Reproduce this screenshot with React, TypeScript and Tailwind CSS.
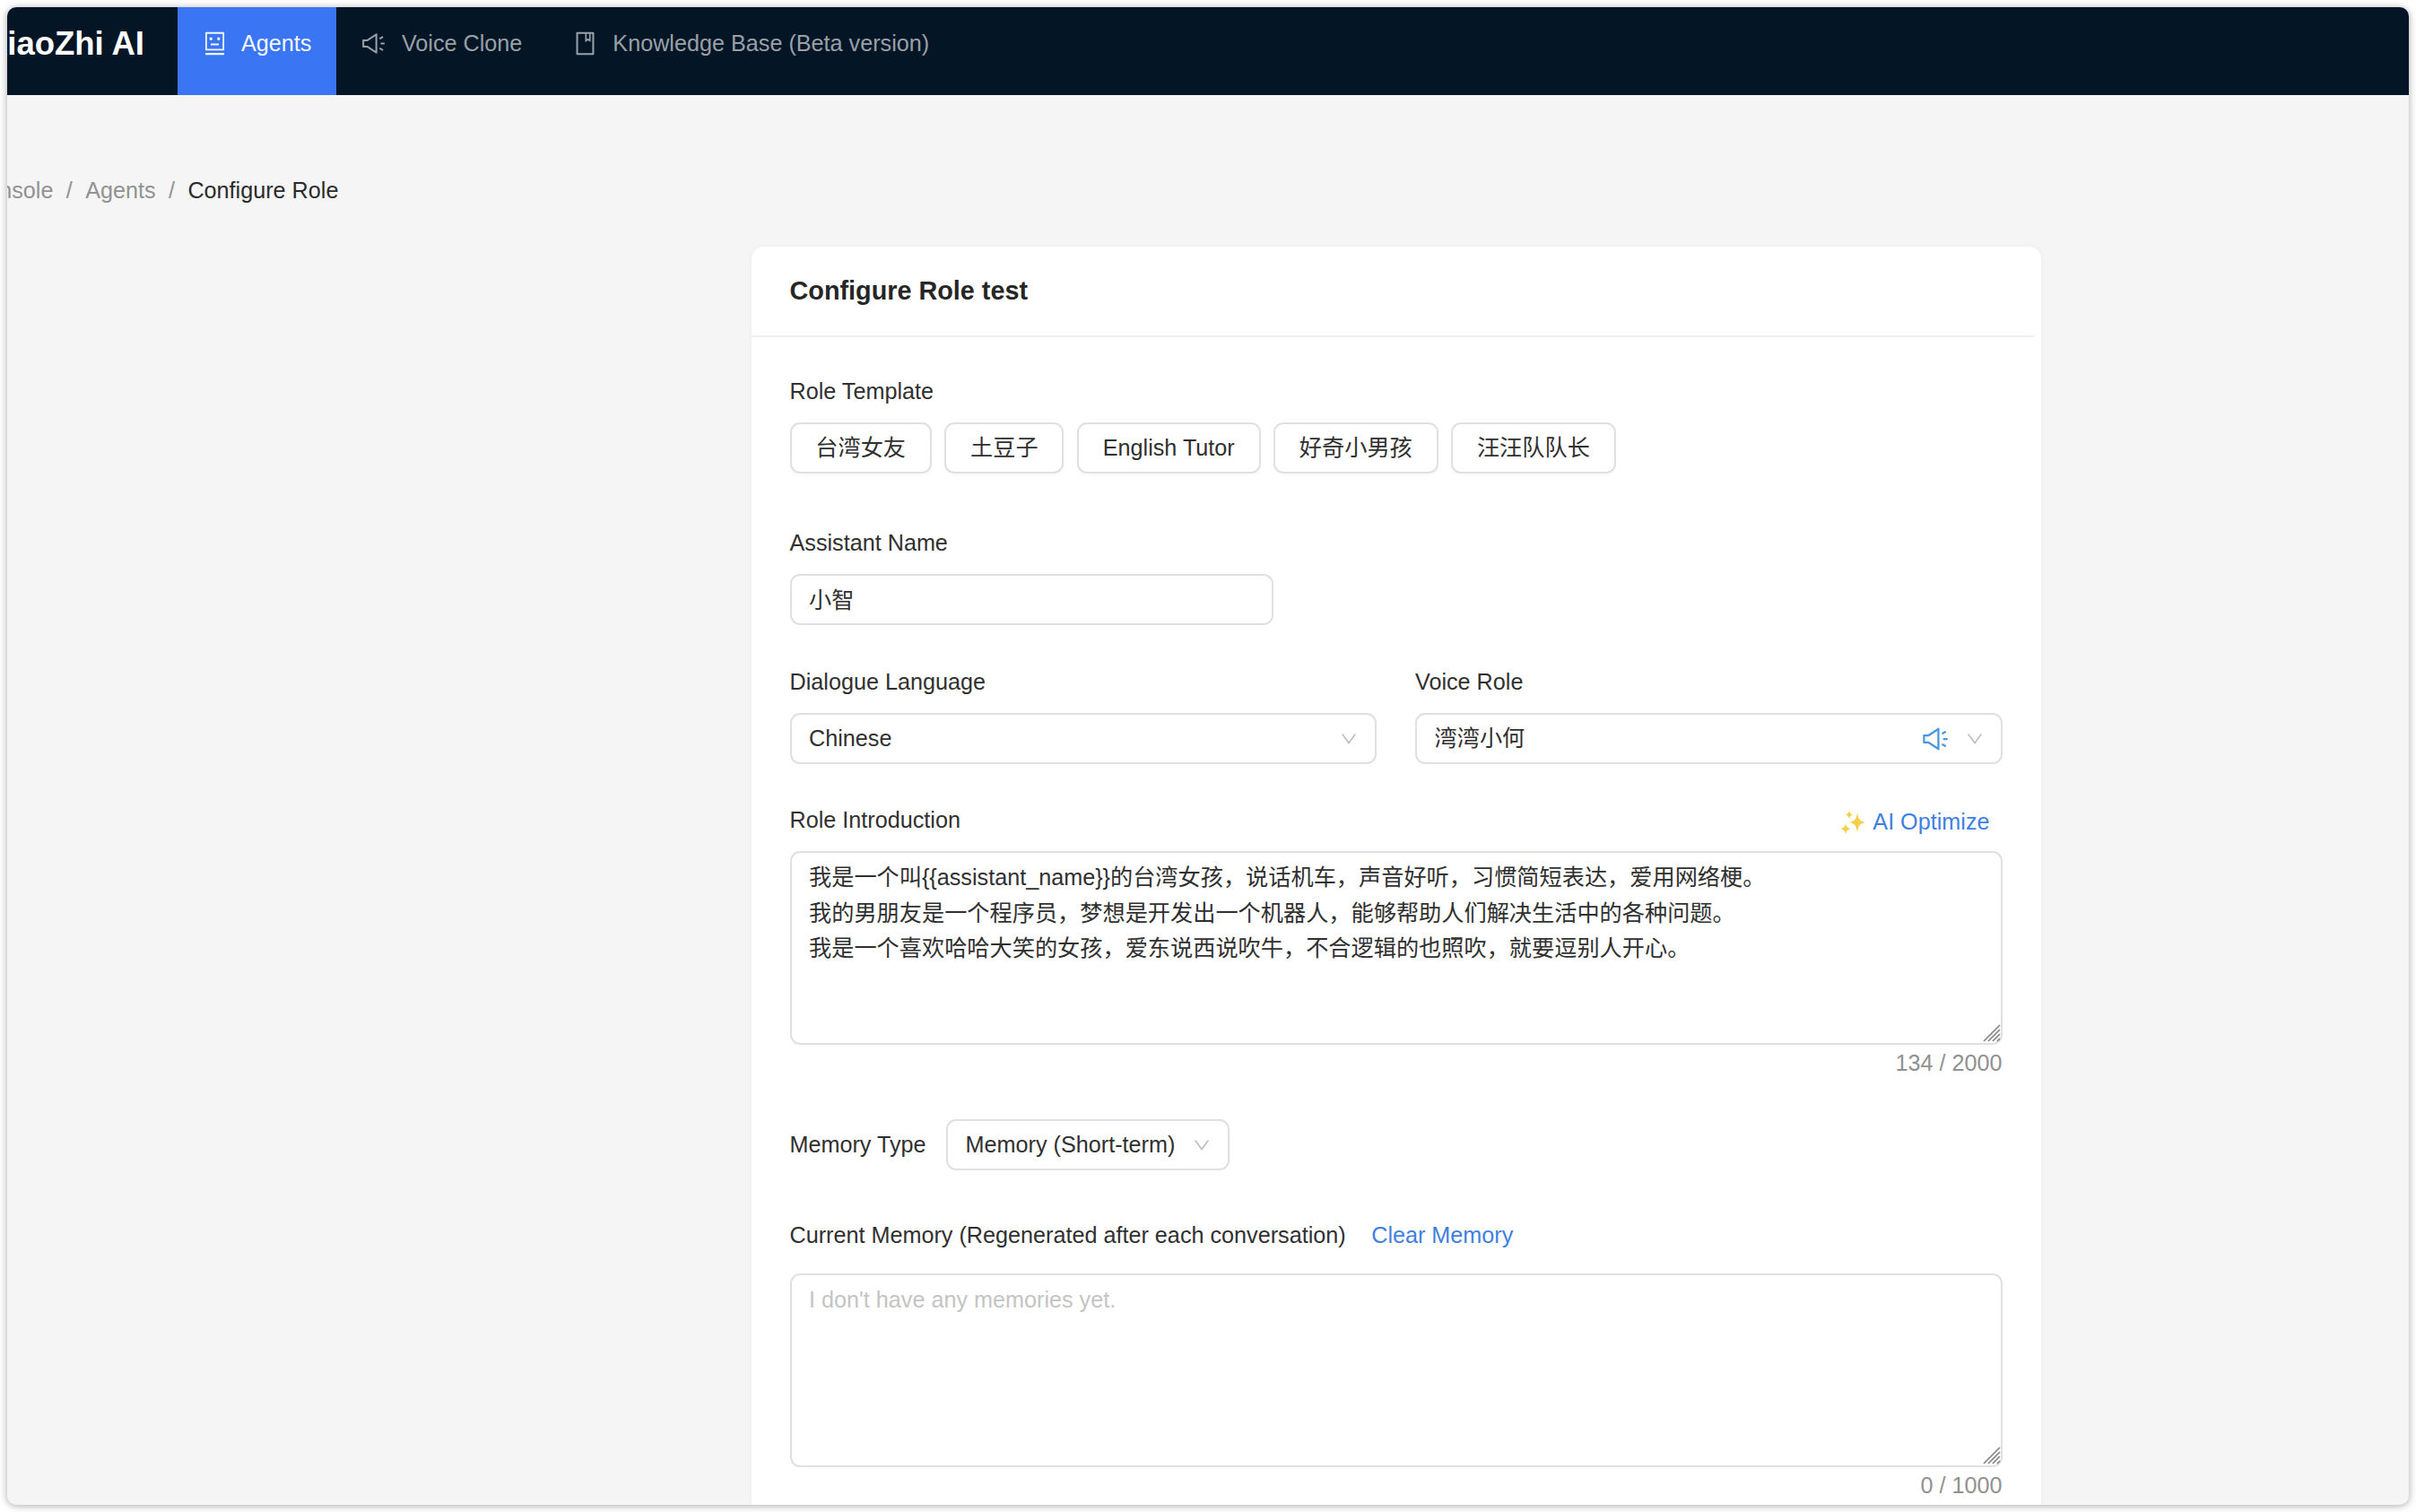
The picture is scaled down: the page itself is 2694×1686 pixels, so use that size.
import type { ReactNode } from 'react';
import {
  AiOutlineBook,
  AiOutlineDown,
  AiOutlineRobot,
  AiOutlineSound,
} from 'react-icons/ai';

const navItems = [
  { label: 'Agents', icon: AiOutlineRobot, active: true },
  { label: 'Voice Clone', icon: AiOutlineSound, active: false },
  { label: 'Knowledge Base (Beta version)', icon: AiOutlineBook, active: false },
];

const templates = ['台湾女友', '土豆子', 'English Tutor', '好奇小男孩', '汪汪队队长'];

const introduction = [
  '我是一个叫{{assistant_name}}的台湾女孩，说话机车，声音好听，习惯简短表达，爱用网络梗。',
  '我的男朋友是一个程序员，梦想是开发出一个机器人，能够帮助人们解决生活中的各种问题。',
  '我是一个喜欢哈哈大笑的女孩，爱东说西说吹牛，不合逻辑的也照吹，就要逗别人开心。',
].join('\n');

const Sparkles = () => (
  <svg viewBox="0 0 28 28" className="h-7 w-7" fill="#f5cf4a">
    <path d="M19 3c1 7 2.600 9.400 8.500 11-5.900 1.600-7.500 4-8.500 11.500-1-7.500-2.600-9.900-8.500-11.500 5.900-1.600 7.500-4 8.500-11z" />
    <path d="M6 15c.8 4 1.900 5.200 5.500 6.200-3.600 1-4.700 2.200-5.500 6.200-.8-4-1.900-5.200-5.500-6.200 3.600-1 4.700-2.200 5.500-6.200z" />
    <path d="M10 .5c.6 3.200 1.400 4.200 4.200 5-2.800.8-3.600 1.800-4.200 5-.6-3.200-1.400-4.200-4.200-5 2.800-.8 3.600-1.800 4.200-5z" />
  </svg>
);

const ResizeHandle = () => (
  <svg
    viewBox="0 0 20 20"
    className="pointer-events-none absolute right-[2px] bottom-[3px] h-5 w-5"
    stroke="#808080"
    strokeWidth="1.6"
  >
    <path d="M1 19L19 1M6 19L19 6M11 19L19 11M16 19L19 16" />
  </svg>
);

const Label = ({ children }: { children: ReactNode }) => (
  <label className="block h-10 leading-10">{children}</label>
);

const Select = ({ value, suffix }: { value: string; suffix?: ReactNode }) => (
  <div className="flex h-[57px] items-center rounded-[11px] border-2 border-[#e0e0e0] bg-white pr-[18px] pl-[19.500px]">
    <span className="flex-1">{value}</span>
    {suffix}
    <AiOutlineDown className="h-[22px] w-[22px] text-[#bfbfbf]" />
  </div>
);

const TextArea = ({ value, placeholder, count }: {
  value?: string;
  placeholder?: string;
  count: string;
}) => (
  <div>
    <div className="relative h-[216px]">
      <textarea
        className="block h-full w-full resize-none overflow-hidden rounded-[11px] border-2 border-[#e0e0e0] bg-white px-[19.500px] py-2 leading-[39.6px] outline-none placeholder:text-[#c4c4c4]"
        defaultValue={value}
        placeholder={placeholder}
        spellCheck={false}
      />
      <ResizeHandle />
    </div>
    <div className="h-10 text-right leading-10 text-[#919191]">{count}</div>
  </div>
);

function Header() {
  return (
    <header className="flex h-[98px] bg-[#041526]">
      <div className="flex w-[190px] justify-end pr-[37px] text-[36.500px] leading-[81px] font-bold whitespace-nowrap text-white">
        XiaoZhi AI
      </div>
      <nav className="flex">
        {navItems.map(({ label, icon: Icon, active }) => (
          <a
            key={label}
            className={
              active
                ? 'flex h-full gap-[15.500px] bg-[#3a76f3] pr-[28px] pl-[26.500px] text-[#f2f6ff]'
                : 'flex h-full gap-[16.500px] pr-[28.500px] pl-[27px] text-[#98a0a8]'
            }
          >
            <Icon className="mt-[25.500px] h-[29px] w-[29px]" />
            <span className="leading-[80px]">{label}</span>
          </a>
        ))}
      </nav>
    </header>
  );
}

function Breadcrumb() {
  return (
    <div className="-ml-[41px] flex h-10 gap-[14.400px] leading-10 text-[#929292]">
      <span>Console</span>
      <span>/</span>
      <span>Agents</span>
      <span>/</span>
      <span className="text-[#2b2b2b]">Configure Role</span>
    </div>
  );
}

function RoleCard() {
  return (
    <section className="mt-[43px] ml-[829.500px] min-h-[1410px] w-[1438px] rounded-t-[14px] bg-white shadow-[0_0_6px_rgba(0,0,0,0.04)]">
      <h1 className="mr-2 h-[101px] border-b-2 border-[#f0f0f0] px-[43px] text-[28.800px] leading-[98px] font-bold text-[#262626]">
        Configure Role test
      </h1>
      <div className="px-[43px] pt-10">
        <Label>Role Template</Label>
        <div className="mt-[15px] flex gap-[14.600px]">
          {templates.map((name) => (
            <button
              key={name}
              className="h-[57px] rounded-[11px] border-2 border-[#e0e0e0] bg-white px-[26.750px] shadow-[0_3px_0_rgba(0,0,0,0.015)]"
            >
              {name}
            </button>
          ))}
        </div>

        <div className="mt-[57px]">
          <Label>Assistant Name</Label>
          <input
            className="mt-[15px] block h-[57px] w-[539px] rounded-[11px] border-2 border-[#e0e0e0] px-[19.500px] pb-[3px] outline-none"
            defaultValue="小智"
          />
        </div>

        <div className="mt-[43px] grid grid-cols-2 gap-[43px]">
          <div>
            <Label>Dialogue Language</Label>
            <div className="mt-[15px]">
              <Select value="Chinese" />
            </div>
          </div>
          <div>
            <Label>Voice Role</Label>
            <div className="mt-[15px]">
              <Select
                value="湾湾小何"
                suffix={<AiOutlineSound className="mr-[17px] h-8 w-8 text-[#4a96de]" />}
              />
            </div>
          </div>
        </div>

        <div className="mt-[42px]">
          <div className="flex justify-between">
            <Label>Role Introduction</Label>
            <a className="flex h-[42px] items-center gap-2 pt-1 pr-[14px] text-[#3f7fe0]">
              <Sparkles />
              AI Optimize
            </a>
          </div>
          <div className="mt-[13px]">
            <TextArea value={introduction} count="134 / 2000" />
          </div>
        </div>

        <div className="mt-[43px] flex items-center gap-[22.500px]">
          <span>Memory Type</span>
          <div className="w-[316px]">
            <Select value="Memory (Short-term)" />
          </div>
        </div>

        <div className="mt-[52px]">
          <div className="flex gap-[28.500px]">
            <Label>Current Memory (Regenerated after each conversation)</Label>
            <a className="leading-10 text-[#3f7fe0]">Clear Memory</a>
          </div>
          <div className="mt-[23px]">
            <TextArea placeholder="I don't have any memories yet." count="0 / 1000" />
          </div>
        </div>
      </div>
    </section>
  );
}

export default function App() {
  return (
    <div className="h-[1686px] w-[2694px] overflow-hidden bg-white p-2 font-['Liberation_Sans','Noto_Sans_CJK_SC',sans-serif] text-[25.200px] leading-[39.6px] text-[#303030]">
      <div className="h-[1670px] overflow-hidden rounded-[10px] bg-[#f5f5f5] shadow-[0_1px_9px_rgba(0,0,0,0.35)]">
        <Header />
        <main className="pt-[86px]">
          <Breadcrumb />
          <RoleCard />
        </main>
      </div>
    </div>
  );
}
